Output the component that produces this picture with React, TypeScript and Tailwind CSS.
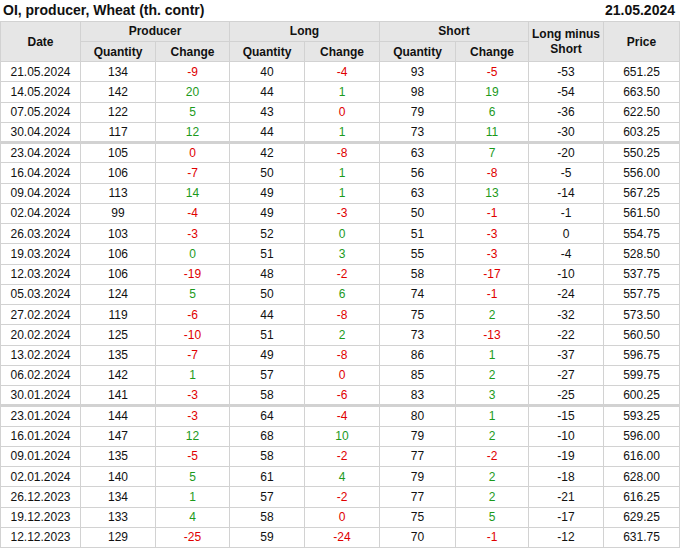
import React from "react";

// [date, prodQty, prodChg, longQty, longChg, shortQty, shortChg, longMinusShort, price]
// zero changes carry a sign suffix for their colour ("0+" green, "0-" red)
const rows: string[][] = [
  ["21.05.2024", "134", "-9", "40", "-4", "93", "-5", "-53", "651.25"],
  ["14.05.2024", "142", "20", "44", "1", "98", "19", "-54", "663.50"],
  ["07.05.2024", "122", "5", "43", "0-", "79", "6", "-36", "622.50"],
  ["30.04.2024", "117", "12", "44", "1", "73", "11", "-30", "603.25"],
  ["23.04.2024", "105", "0-", "42", "-8", "63", "7", "-20", "550.25"],
  ["16.04.2024", "106", "-7", "50", "1", "56", "-8", "-5", "556.00"],
  ["09.04.2024", "113", "14", "49", "1", "63", "13", "-14", "567.25"],
  ["02.04.2024", "99", "-4", "49", "-3", "50", "-1", "-1", "561.50"],
  ["26.03.2024", "103", "-3", "52", "0+", "51", "-3", "0", "554.75"],
  ["19.03.2024", "106", "0+", "51", "3", "55", "-3", "-4", "528.50"],
  ["12.03.2024", "106", "-19", "48", "-2", "58", "-17", "-10", "537.75"],
  ["05.03.2024", "124", "5", "50", "6", "74", "-1", "-24", "557.75"],
  ["27.02.2024", "119", "-6", "44", "-8", "75", "2", "-32", "573.50"],
  ["20.02.2024", "125", "-10", "51", "2", "73", "-13", "-22", "560.50"],
  ["13.02.2024", "135", "-7", "49", "-8", "86", "1", "-37", "596.75"],
  ["06.02.2024", "142", "1", "57", "0-", "85", "2", "-27", "599.75"],
  ["30.01.2024", "141", "-3", "58", "-6", "83", "3", "-25", "600.25"],
  ["23.01.2024", "144", "-3", "64", "-4", "80", "1", "-15", "593.25"],
  ["16.01.2024", "147", "12", "68", "10", "79", "2", "-10", "596.00"],
  ["09.01.2024", "135", "-5", "58", "-2", "77", "-2", "-19", "616.00"],
  ["02.01.2024", "140", "5", "61", "4", "79", "2", "-18", "628.00"],
  ["26.12.2023", "134", "1", "57", "-2", "77", "2", "-21", "616.25"],
  ["19.12.2023", "133", "4", "58", "0-", "75", "5", "-17", "629.25"],
  ["12.12.2023", "129", "-25", "59", "-24", "70", "-1", "-12", "631.75"],
];

// rows followed by a heavier divider
const thick = new Set(["30.04.2024", "30.01.2024"]);

function Change({ v }: { v: string }) {
  let red = v.startsWith("-");
  let text = v;
  if (v === "0+" || v === "0-") {
    red = v === "0-";
    text = "0";
  }
  return <span className={red ? "text-[#e00000]" : "text-[#1c9a1c]"}>{text}</span>;
}

export default function App() {
  const th = "border border-[#d2d2d2] bg-[#e6e6e6] font-bold text-center text-[#111] h-[20px] p-0";
  return (
    <div className="w-[680px] h-[548px] bg-white text-[12px] text-[#111]" style={{ fontFamily: '"Liberation Sans", Arial, sans-serif' }}>
      <div className="h-[21px] flex items-center justify-between pl-[3px] pr-[5px] text-[14px] font-bold">
        <span>OI, producer, Wheat (th. contr)</span>
        <span>21.05.2024</span>
      </div>
      <table className="border-collapse table-fixed w-[679px]">
        <colgroup>
          <col className="w-[80px]" />
          <col className="w-[75px]" />
          <col className="w-[74px]" />
          <col className="w-[75px]" />
          <col className="w-[75px]" />
          <col className="w-[76px]" />
          <col className="w-[73px]" />
          <col className="w-[75px]" />
          <col className="w-[76px]" />
        </colgroup>
        <thead>
          <tr>
            <th rowSpan={2} className={th}>Date</th>
            <th colSpan={2} className={`${th} pb-[1px]`}>Producer</th>
            <th colSpan={2} className={`${th} pb-[1px]`}>Long</th>
            <th colSpan={2} className={`${th} pb-[1px]`}>Short</th>
            <th rowSpan={2} className={`${th} leading-[15px]`}>Long minus<br />Short</th>
            <th rowSpan={2} className={th}>Price</th>
          </tr>
          <tr>
            <th className={th}>Quantity</th>
            <th className={th}>Change</th>
            <th className={th}>Quantity</th>
            <th className={th}>Change</th>
            <th className={th}>Quantity</th>
            <th className={th}>Change</th>
          </tr>
        </thead>
        <tbody>
          {rows.map((r) => {
            const td = `border-x border-t border-[#d2d2d2] text-center h-[20.25px] p-0 ${
              thick.has(r[0]) ? "border-b-[3px]" : "border-b"
            }`;
            return (
              <tr key={r[0]}>
                <td className={td}>{r[0]}</td>
                <td className={td}>{r[1]}</td>
                <td className={td}><Change v={r[2]} /></td>
                <td className={td}>{r[3]}</td>
                <td className={td}><Change v={r[4]} /></td>
                <td className={td}>{r[5]}</td>
                <td className={td}><Change v={r[6]} /></td>
                <td className={td}>{r[7]}</td>
                <td className={td}>{r[8]}</td>
              </tr>
            );
          })}
        </tbody>
      </table>
    </div>
  );
}
